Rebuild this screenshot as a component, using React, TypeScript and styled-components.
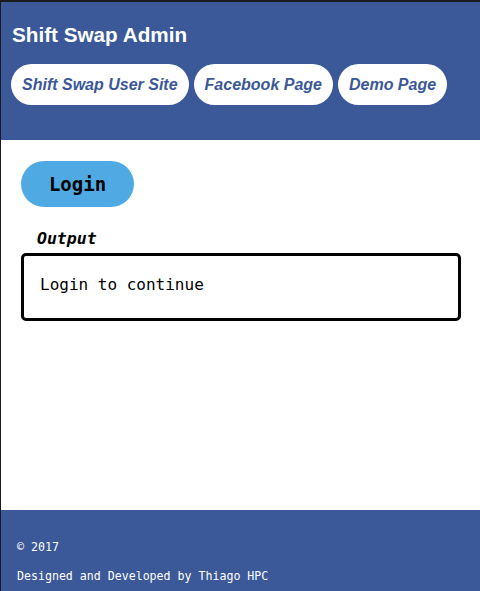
import React from "react";
import styled, { createGlobalStyle } from "styled-components";

const Global = createGlobalStyle`
  html, body { margin: 0; padding: 0; background: #ffffff; }
  * { box-sizing: border-box; }
`;

const Frame = styled.div`
  display: flex;
  flex-direction: column;
  height: 591px;
  width: 480px;
  border-top: 2px solid #1b1b1f;
  border-left: 1px solid #1b1b1f;
  background: #ffffff;
`;

const Header = styled.header`
  background: #3b5998;
  padding: 20px 0 35px 10px;
  display: flex;
  flex-direction: column;
  gap: 17px;
`;

const Title = styled.h1`
  margin: 0 0 0 1px;
  font-family: "Liberation Sans", Arial, sans-serif;
  font-weight: bold;
  font-size: 20.7px;
  line-height: 25px;
  color: #ffffff;
`;

const Nav = styled.nav`
  display: flex;
  gap: 5px;
`;

const Pill = styled.a`
  display: inline-block;
  background: #ffffff;
  color: #3b5998;
  font-family: "Liberation Sans", Arial, sans-serif;
  font-weight: bold;
  font-style: italic;
  font-size: 16px;
  line-height: 19px;
  padding: 11px 11px;
  border-radius: 21px;
  text-decoration: none;
  white-space: nowrap;
`;

const Main = styled.main`
  flex: 1;
  padding: 21px 19px 0 20px;
  display: flex;
  flex-direction: column;
  align-items: flex-start;
`;

const LoginButton = styled.button`
  width: 113px;
  height: 46px;
  border: none;
  border-radius: 23px;
  background: #4faae3;
  color: #000000;
  font-family: "DejaVu Sans Mono", "Liberation Mono", monospace;
  font-weight: bold;
  font-size: 19px;
  padding: 0;
  margin: 0;
`;

const Label = styled.div`
  margin: 22px 0 0 16px;
  font-family: "DejaVu Sans Mono", "Liberation Mono", monospace;
  font-weight: bold;
  font-style: italic;
  font-size: 16.5px;
  line-height: 20px;
  color: #000000;
`;

const OutputBox = styled.div`
  margin-top: 4px;
  align-self: stretch;
  height: 68px;
  border: 3px solid #000000;
  border-radius: 5px;
  padding: 0 16px;
  display: flex;
  align-items: center;
  font-family: "DejaVu Sans Mono", "Liberation Mono", monospace;
  font-size: 16px;
  color: #000000;
  padding-bottom: 6px;
`;

const Footer = styled.footer`
  height: 81px;
  background: #3b5998;
  padding: 28px 0 0 16px;
  display: flex;
  flex-direction: column;
  gap: 11px;
`;

const FooterLine = styled.p`
  margin: 0;
  font-family: "DejaVu Sans Mono", "Liberation Mono", monospace;
  font-size: 11.6px;
  line-height: 18px;
  color: #ffffff;
`;

export default function App() {
  return (
    <>
      <Global />
      <Frame>
        <Header>
          <Title>Shift Swap Admin</Title>
          <Nav>
            <Pill href="#">Shift Swap User Site</Pill>
            <Pill href="#">Facebook Page</Pill>
            <Pill href="#">Demo Page</Pill>
          </Nav>
        </Header>
        <Main>
          <LoginButton>Login</LoginButton>
          <Label>Output</Label>
          <OutputBox>Login to continue</OutputBox>
        </Main>
        <Footer>
          <FooterLine>© 2017</FooterLine>
          <FooterLine>Designed and Developed by Thiago HPC</FooterLine>
        </Footer>
      </Frame>
    </>
  );
}
